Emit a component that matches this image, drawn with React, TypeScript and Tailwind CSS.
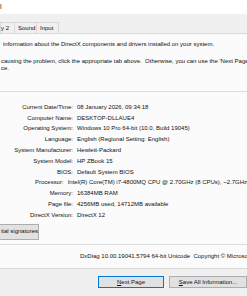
import React from "react";

const rows: [string, string][] = [
  ["Current Date/Time:", "08 January 2026, 09:34:18"],
  ["Computer Name:", "DESKTOP-DLLAUE4"],
  ["Operating System:", "Windows 10 Pro 64-bit (10.0, Build 19045)"],
  ["Language:", "English (Regional Setting: English)"],
  ["System Manufacturer:", "Hewlett-Packard"],
  ["System Model:", "HP ZBook 15"],
  ["BIOS:", "Default System BIOS"],
  ["Processor:", "Intel(R) Core(TM) i7-4800MQ CPU @ 2.70GHz (8 CPUs), ~2.7GHz"],
  ["Memory:", "16384MB RAM"],
  ["Page file:", "4256MB used, 14712MB available"],
  ["DirectX Version:", "DirectX 12"],
];

function Tab({ label, className = "" }: { label: string; className?: string }) {
  return (
    <div
      className={`h-[11px] flex items-center px-[3px] border border-b-0 border-[#d9d9d9] bg-[#f0f0f0] -ml-px ${className}`}
    >
      {label}
    </div>
  );
}

export default function App() {
  return (
    <div
      className="w-[247px] h-[296px] overflow-hidden bg-[#f0f0f0] text-[6px] text-[#111] whitespace-nowrap"
      style={{ fontFamily: '"Liberation Sans", Arial, sans-serif' }}
    >
      {/* title bar */}
      <div className="h-[14px] bg-white flex items-center text-[7px]">l</div>

      {/* tabs */}
      <div className="h-[19px] flex items-end">
        <Tab label="y 2" className="w-[15px] pl-0 ml-0" />
        <Tab label="Sound" className="w-[23px]" />
        <Tab label="Input" className="w-[23px]" />
      </div>

      {/* tab page */}
      <div className="h-[236px] bg-[#fbfbfb] border-y border-[#d9d9d9] flex flex-col">
        <div className="h-[20px] flex items-center pl-[3px]">
          information about the DirectX components and drivers installed on your system.
        </div>
        <div className="h-[4px]" />
        <div className="pl-px leading-[7px]">
          <div>causing the problem, click the appropriate tab above.&nbsp; Otherwise, you can use the 'Next Page' button below</div>
          <div>ce.</div>
        </div>
        <div className="h-[19px]" />
        <div className="border-t border-[#dcdcdc]" />
        <div className="flex flex-col pt-[10px]">
          {rows.map(([label, value]) => (
            <div key={label} className="h-[10.8px] flex items-center">
              <div className="w-[74px] text-right pr-px">{label}</div>
              <div className="pl-[3px]">{value}</div>
            </div>
          ))}
        </div>
        <div className="h-[3px]" />
        <div className="w-[39px] h-[16px] flex items-center pl-px bg-[#e1e1e1] border border-l-0 border-[#adadad]">
          ital signatures
        </div>
        <div className="h-[4px]" />
        <div className="border-t border-[#dcdcdc]" />
        <div className="flex-1 flex items-center pl-[80px]">
          DxDiag 10.00.19041.5794 64-bit Unicode&nbsp; Copyright © Microsoft. All rights reserved.
        </div>
      </div>

      {/* buttons */}
      <div className="flex pt-[7px] pl-[98px] gap-[5px]">
        <button className="w-[70px] h-[12px] flex items-center justify-center bg-[#e1e1e1] border border-[#0078d7] text-[6px]">
          <span>
            <u>N</u>ext Page
          </span>
        </button>
        <button className="w-[78px] h-[12px] flex items-center justify-center bg-[#e1e1e1] border border-[#adadad] text-[6px] shrink-0">
          <span>
            <u>S</u>ave All Information...
          </span>
        </button>
      </div>
    </div>
  );
}
